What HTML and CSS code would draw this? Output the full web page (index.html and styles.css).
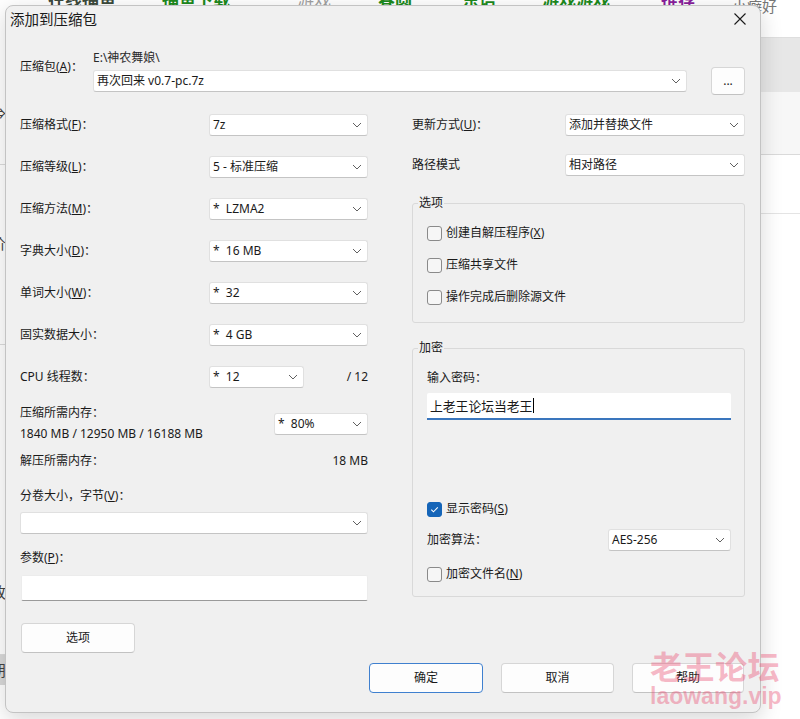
FILE: index.html
```html
<!DOCTYPE html>
<html lang="zh-CN">
<head>
<meta charset="utf-8">
<title>添加到压缩包</title>
<link rel="stylesheet" href="styles.css">
</head>
<body>
<div class="page">
  <div class="nav">
    <span class="n-dark">在线捕鱼</span>
    <span class="n-green">捕鱼下载</span>
    <span class="n-gray">游戏</span>
    <span class="n-green">春圆</span>
    <span class="n-green">东语</span>
    <span class="n-green">游戏游戏</span>
    <span class="n-purple">推荐</span>
    <span class="n-light">小癖好</span>
  </div>
  <div class="page-body">
    <div class="side-left">
      <div class="sl r1"></div>
      <div class="sl r2">⇒</div>
      <div class="sl r3"></div>
      <div class="sl r4"></div>
      <div class="sl r5">价</div>
      <div class="sl r6"></div>
      <div class="sl r7"></div>
      <div class="sl r8">故</div>
      <div class="sl r9"></div>
      <div class="sl r10">朋</div>
    </div>
    <div class="side-right">
      <div class="sr b1"></div>
      <div class="sr b2"></div>
      <div class="sr b3"></div>
    </div>
  </div>
</div>

<div class="dialog">
  <div class="titlebar">
    <span class="title">添加到压缩包</span>
    <svg class="close" viewBox="0 0 12 12"><path d="M0.5 0.5L11.5 11.5M11.5 0.5L0.5 11.5"/></svg>
  </div>
  <div class="content">
    <div class="archive">
      <span class="archive-label">压缩包(<u>A</u>)：</span>
      <span class="archive-path">E:\神农舞娘\</span>
      <div class="combo archive-combo"><span>再次回来 v0.7-pc.7z</span><svg class="chev" viewBox="0 0 10 6"><path d="M1 1l4 4 4-4"/></svg></div>
      <button class="btn browse">...</button>
    </div>

    <div class="main">
      <div class="col-left">
        <div class="lrow"><span>压缩格式(<u>F</u>)：</span><div class="combo"><span>7z</span><svg class="chev" viewBox="0 0 10 6"><path d="M1 1l4 4 4-4"/></svg></div></div>
        <div class="lrow"><span>压缩等级(<u>L</u>)：</span><div class="combo"><span>5 - 标准压缩</span><svg class="chev" viewBox="0 0 10 6"><path d="M1 1l4 4 4-4"/></svg></div></div>
        <div class="lrow"><span>压缩方法(<u>M</u>)：</span><div class="combo"><span>*  LZMA2</span><svg class="chev" viewBox="0 0 10 6"><path d="M1 1l4 4 4-4"/></svg></div></div>
        <div class="lrow"><span>字典大小(<u>D</u>)：</span><div class="combo"><span>*  16 MB</span><svg class="chev" viewBox="0 0 10 6"><path d="M1 1l4 4 4-4"/></svg></div></div>
        <div class="lrow"><span>单词大小(<u>W</u>)：</span><div class="combo"><span>*  32</span><svg class="chev" viewBox="0 0 10 6"><path d="M1 1l4 4 4-4"/></svg></div></div>
        <div class="lrow"><span>固实数据大小：</span><div class="combo"><span>*  4 GB</span><svg class="chev" viewBox="0 0 10 6"><path d="M1 1l4 4 4-4"/></svg></div></div>
        <div class="lrow cpu"><span>CPU 线程数：</span><div class="combo"><span>*  12</span><svg class="chev" viewBox="0 0 10 6"><path d="M1 1l4 4 4-4"/></svg></div><span class="r-text">/ 12</span></div>
        <div class="mem">
          <div class="mem-text"><div>压缩所需内存：</div><div>1840 MB / 12950 MB / 16188 MB</div></div>
          <div class="combo mem-combo"><span>*  80%</span><svg class="chev" viewBox="0 0 10 6"><path d="M1 1l4 4 4-4"/></svg></div>
        </div>
        <div class="unpack"><span>解压所需内存：</span><span>18 MB</span></div>
        <div class="split-label">分卷大小，字节(<u>V</u>)：</div>
        <div class="combo split-combo"><span></span><svg class="chev" viewBox="0 0 10 6"><path d="M1 1l4 4 4-4"/></svg></div>
        <div class="params-label">参数(<u>P</u>)：</div>
        <div class="params-input"></div>
        <button class="btn opt-btn">选项</button>
      </div>

      <div class="col-right">
        <div class="rrow"><span>更新方式(<u>U</u>)：</span><div class="combo"><span>添加并替换文件</span><svg class="chev" viewBox="0 0 10 6"><path d="M1 1l4 4 4-4"/></svg></div></div>
        <div class="rrow second"><span>路径模式</span><div class="combo"><span>相对路径</span><svg class="chev" viewBox="0 0 10 6"><path d="M1 1l4 4 4-4"/></svg></div></div>

        <fieldset class="group options">
          <legend>选项</legend>
          <div class="check"><span class="box"></span><span>创建自解压程序(<u>X</u>)</span></div>
          <div class="check"><span class="box"></span><span>压缩共享文件</span></div>
          <div class="check"><span class="box"></span><span>操作完成后删除源文件</span></div>
        </fieldset>

        <fieldset class="group encrypt">
          <legend>加密</legend>
          <div class="pwd-label">输入密码：</div>
          <div class="pwd"><span>上老王论坛当老王</span><span class="caret"></span></div>
          <div class="check show-pwd"><span class="box checked"><svg viewBox="0 0 15 15"><path d="M3.8 7.6l2.5 2.5 5-5"/></svg></span><span>显示密码(<u>S</u>)</span></div>
          <div class="algo"><span>加密算法：</span><div class="combo"><span>AES-256</span><svg class="chev" viewBox="0 0 10 6"><path d="M1 1l4 4 4-4"/></svg></div></div>
          <div class="check enc-name"><span class="box"></span><span>加密文件名(<u>N</u>)</span></div>
        </fieldset>
      </div>
    </div>

    <div class="actions">
      <button class="btn primary ok">确定</button>
      <button class="btn cancel">取消</button>
      <button class="btn help">帮助</button>
    </div>
  </div>
</div>

<div class="watermark">
  <div class="wm-cn">老王论坛</div>
  <div class="wm-en">laowang.vip</div>
</div>
</body>
</html>
```

FILE: styles.css
```css
html, body {
  margin: 0;
  padding: 0;
}

body {
  width: 800px;
  height: 719px;
  overflow: hidden;
  position: relative;
  background: #ffffff;
  font-family: "Noto Sans", "Noto Sans CJK SC", sans-serif;
  font-size: 12px;
  color: #1a1a1a;
}

u {
  text-decoration: underline;
  text-underline-offset: 1px;
}

/* ---------- page behind the dialog ---------- */
.page {
  width: 800px;
  height: 719px;
}

.nav {
  display: grid;
  grid-template-columns: 114px 135px 81px 84px 80px 119px 71px auto;
  padding-left: 48px;
  margin-top: -11px;
  height: 20px;
  line-height: 20px;
  font-size: 17px;
  font-weight: bold;
  font-family: "Noto Sans CJK SC", sans-serif;
  white-space: nowrap;
}

.n-dark { color: #3c4a3c; }
.n-green { color: #1d8a1d; }
.n-gray { color: #a0a0a0; font-weight: normal; }
.n-purple { color: #8a1f9c; }
.n-light {
  color: #777;
  font-weight: normal;
  font-size: 15px;
  padding-top: 7px;
}

.page-body {
  display: flex;
  justify-content: space-between;
  margin-top: 28px;
}

.side-left {
  width: 6px;
  display: flex;
  flex-direction: column;
}

.sl {
  box-sizing: border-box;
  font-size: 15px;
  color: #444;
  font-family: "Noto Sans CJK SC", sans-serif;
  text-align: right;
  white-space: nowrap;
  direction: rtl;
}

.r1 { height: 56px; }
.r2 { height: 40px; line-height: 40px; }
.r3 { height: 32px; border-bottom: 1px solid #dcdcdc; }
.r4 { height: 60px; }
.r5 { height: 36px; line-height: 36px; }
.r6 { height: 84px; border-bottom: 1px solid #dcdcdc; }
.r7 { height: 230px; }
.r8 { height: 34px; line-height: 34px; }
.r9 { height: 46px; border-bottom: 1px solid #dcdcdc; }
.r10 { height: 30px; line-height: 30px; background: #d9d9d9; }

.side-right {
  width: 60px;
  display: flex;
  flex-direction: column;
}

.sr { box-sizing: border-box; }
.b1 { height: 55px; background: #e7e7e7; border-top: 1px solid #dedede; }
.b2 { height: 63px; background: #f7f7f7; border-bottom: 1px solid #dadada; }
.b3 { height: 59px; border-bottom: 1px solid #e4e4e4; }

/* ---------- dialog window ---------- */
.dialog {
  position: absolute;
  left: 5px;
  top: 5px;
  width: 756px;
  height: 708px;
  box-sizing: border-box;
  background: #f0f0f0;
  border: 1px solid #c3c3c3;
  border-radius: 8px;
  box-shadow: 0 6px 22px rgba(0, 0, 0, 0.16);
}

.titlebar {
  height: 29px;
  box-sizing: border-box;
  display: flex;
  align-items: center;
  justify-content: space-between;
  padding: 0 14px 3px 4px;
}

.title {
  font-family: "Noto Sans CJK SC", sans-serif;
  font-size: 14.5px;
  line-height: 20px;
  color: #1a1a1a;
}

.close {
  width: 12px;
  height: 12px;
  stroke: #1a1a1a;
  stroke-width: 1.1;
  fill: none;
}

.content {
  padding: 15px 15px 0 14px;
  line-height: 16px;
}

/* archive row */
.archive {
  display: grid;
  grid-template-columns: 73px 594px 1fr 34px;
  grid-template-rows: 16px 22px;
  row-gap: 4px;
}

.archive-label {
  grid-column: 1;
  grid-row: 1 / span 2;
  margin-top: 9px;
}

.archive-path {
  grid-column: 2;
  grid-row: 1;
  color: #2a2a2a;
}

.archive-combo {
  grid-column: 2;
  grid-row: 2;
}

.browse {
  grid-column: 4;
  grid-row: 2;
  align-self: center;
  height: 28px;
  font-size: 10px;
  padding-top: 5px;
}

/* combo box */
.combo {
  height: 22px;
  box-sizing: border-box;
  background: #ffffff;
  border: 1px solid #e0e0e0;
  border-bottom-color: #c4c4c4;
  border-radius: 3px;
  display: flex;
  align-items: center;
  justify-content: space-between;
  padding: 0 5px 0 3px;
  white-space: pre;
  color: #1a1a1a;
}

.chev {
  width: 10px;
  height: 6px;
  flex: none;
  fill: none;
  stroke: #606060;
  stroke-width: 1;
}

/* main two-column area */
.main {
  display: grid;
  grid-template-columns: 348px 333px;
  column-gap: 44px;
  margin-top: 22px;
}

.col-left,
.col-right {
  display: flex;
  flex-direction: column;
}

.lrow {
  display: grid;
  grid-template-columns: 189px 159px;
  align-items: center;
  height: 22px;
  margin-bottom: 20px;
}

.lrow.cpu {
  grid-template-columns: 189px 95px 1fr;
  margin-bottom: 14px;
}

.r-text {
  text-align: right;
}

.mem {
  display: grid;
  grid-template-columns: 1fr 94px;
  align-items: start;
}

.mem-text {
  line-height: 21px;
}

.mem-combo {
  margin-top: 11px;
}

.unpack {
  display: flex;
  justify-content: space-between;
  margin-top: 9px;
}

.split-label {
  margin-top: 19px;
}

.split-combo {
  margin-top: 8px;
}

.params-label {
  margin-top: 16px;
}

.params-input {
  margin-top: 9px;
  margin-left: 1px;
  height: 26px;
  box-sizing: border-box;
  background: #ffffff;
  border: 1px solid #ececec;
  border-bottom: 1px solid #9a9a9a;
  border-radius: 2px;
}

.btn {
  box-sizing: border-box;
  background: #fdfdfd;
  border: 1px solid #d6d6d6;
  border-bottom-color: #c2c2c2;
  border-radius: 4px;
  font-family: "Noto Sans", "Noto Sans CJK SC", sans-serif;
  font-size: 12px;
  color: #1a1a1a;
  padding: 0;
  line-height: 16px;
}

.opt-btn {
  margin-top: 22px;
  margin-left: 1px;
  width: 114px;
  height: 30px;
}

/* right column */
.rrow {
  display: grid;
  grid-template-columns: 153px 180px;
  align-items: center;
  height: 22px;
}

.rrow.second {
  margin-top: 18px;
}

.group {
  margin: 0;
  border: 1px solid #d9d9d9;
  border-radius: 3px;
  padding: 14px 13px 17px 14px;
  min-width: 0;
}

.group legend {
  margin-left: -9px;
  padding: 0 1px;
  line-height: 16px;
}

.options {
  margin-top: 19px;
  display: flex;
  flex-direction: column;
  gap: 16px;
}

.encrypt {
  margin-top: 17px;
  padding-bottom: 14px;
}

.check {
  display: flex;
  align-items: center;
  gap: 4px;
  height: 16px;
}

.box {
  width: 15px;
  height: 15px;
  box-sizing: border-box;
  border: 1px solid #8a8a8a;
  border-radius: 3px;
  background: #f6f6f6;
  flex: none;
  display: flex;
}

.box.checked {
  background: #1565b8;
  border-color: #1565b8;
}

.box svg {
  width: 13px;
  height: 13px;
  fill: none;
  stroke: #ffffff;
  stroke-width: 1.2;
}

.pwd {
  margin-top: 7px;
  height: 27px;
  box-sizing: border-box;
  background: #ffffff;
  border-bottom: 2px solid #3a76bd;
  border-radius: 2px 2px 0 0;
  display: flex;
  align-items: center;
  padding: 0 0 0 3px;
  font-family: "Noto Sans CJK SC", sans-serif;
  font-size: 12.8px;
}

.caret {
  display: inline-block;
  width: 1px;
  height: 15px;
  background: #000;
  margin-left: 1px;
}

.show-pwd {
  margin-top: 81px;
}

.algo {
  display: grid;
  grid-template-columns: 1fr 123px;
  align-items: center;
  height: 22px;
  margin-top: 12px;
}

.enc-name {
  margin-top: 15px;
}

/* bottom buttons */
.actions {
  display: flex;
  justify-content: flex-end;
  gap: 18px;
  margin-top: 10px;
  margin-right: 1px;
}

.actions .btn {
  height: 30px;
}

.ok { width: 114px; border-color: #3f80cf; }
.cancel { width: 113px; }
.help { width: 112px; }

/* watermark overlay */
.watermark {
  position: absolute;
  left: 650px;
  top: 645px;
  color: rgba(234, 70, 108, 0.38);
  font-weight: bold;
  pointer-events: none;
}

.wm-cn {
  font-family: "Noto Sans CJK SC", sans-serif;
  font-size: 32px;
  line-height: 40px;
  letter-spacing: 0.5px;
}

.wm-en {
  font-family: "Liberation Sans", sans-serif;
  font-size: 23px;
  line-height: 26px;
  margin-top: -2px;
}
```
